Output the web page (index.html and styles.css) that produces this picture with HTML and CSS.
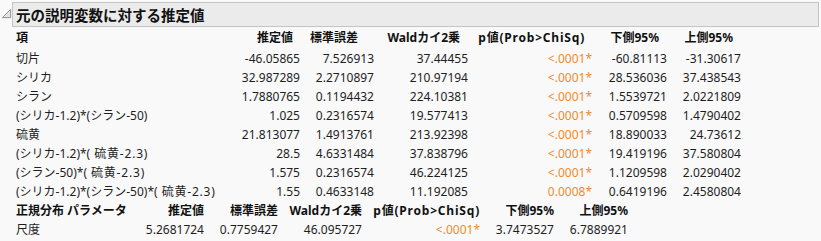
FILE: index.html
```html
<!DOCTYPE html>
<html lang="ja">
<head>
<meta charset="utf-8">
<title>元の説明変数に対する推定値</title>
<link rel="stylesheet" href="styles.css">
</head>
<body>
<div class="outline">
  <div class="outline-head">
    <svg class="disclosure" width="12" height="12" viewBox="0 0 12 12"><polygon points="1.5,10.5 10.5,1.5 10.5,10.5" fill="#e4e4e4" stroke="#8a8a8a" stroke-width="1"/></svg>
    <div class="title-box"><h1 class="title">元の説明変数に対する推定値</h1></div>
  </div>
  <div class="grid t1">
    <div class="th term">項</div>
    <div class="th h1">推定値</div>
    <div class="th h2">標準誤差</div>
    <div class="th h3">Waldカイ2乗</div>
    <div class="th h4 wide">p値(Prob&gt;ChiSq)</div>
    <div class="th h5">下側95%</div>
    <div class="th h6">上側95%</div>

    <div class="td term">切片</div><div class="td">-46.05865</div><div class="td">7.526913</div><div class="td">37.44455</div><div class="td p">&lt;.0001*</div><div class="td">-60.81113</div><div class="td">-31.30617</div>
    <div class="td term">シリカ</div><div class="td">32.987289</div><div class="td">2.2710897</div><div class="td">210.97194</div><div class="td p">&lt;.0001*</div><div class="td">28.536036</div><div class="td">37.438543</div>
    <div class="td term">シラン</div><div class="td">1.7880765</div><div class="td">0.1194432</div><div class="td">224.10381</div><div class="td p">&lt;.0001*</div><div class="td">1.5539721</div><div class="td">2.0221809</div>
    <div class="td term">(シリカ-1.2)*(シラン-50)</div><div class="td">1.025</div><div class="td">0.2316574</div><div class="td">19.577413</div><div class="td p">&lt;.0001*</div><div class="td">0.5709598</div><div class="td">1.4790402</div>
    <div class="td term">硫黄</div><div class="td">21.813077</div><div class="td">1.4913761</div><div class="td">213.92398</div><div class="td p">&lt;.0001*</div><div class="td">18.890033</div><div class="td">24.73612</div>
    <div class="td term">(シリカ-1.2)*(<span class="kj">硫黄-2.3</span>)</div><div class="td">28.5</div><div class="td">4.6331484</div><div class="td">37.838796</div><div class="td p">&lt;.0001*</div><div class="td">19.419196</div><div class="td">37.580804</div>
    <div class="td term">(シラン-50)*(<span class="kj">硫黄-2.3</span>)</div><div class="td">1.575</div><div class="td">0.2316574</div><div class="td">46.224125</div><div class="td p">&lt;.0001*</div><div class="td">1.1209598</div><div class="td">2.0290402</div>
    <div class="td term">(シリカ-1.2)*(シラン-50)*(<span class="kj">硫黄-2.3</span>)</div><div class="td">1.55</div><div class="td">0.4633148</div><div class="td">11.192085</div><div class="td p">0.0008*</div><div class="td">0.6419196</div><div class="td">2.4580804</div>
  </div>
  <div class="grid t2">
    <div class="th term">正規分布 パラメータ</div>
    <div class="th">推定値</div>
    <div class="th">標準誤差</div>
    <div class="th">Waldカイ2乗</div>
    <div class="th wide">p値(Prob&gt;ChiSq)</div>
    <div class="th">下側95%</div>
    <div class="th">上側95%</div>

    <div class="td term">尺度</div><div class="td">5.2681724</div><div class="td">0.7759427</div><div class="td">46.095727</div><div class="td p">&lt;.0001*</div><div class="td">3.7473527</div><div class="td">6.7889921</div>
  </div>
</div>
</body>
</html>
```

FILE: styles.css
```css
html, body {
  margin: 0;
  padding: 0;
  background: #f9f9f9;
}
body {
  font-family: "Noto Sans", "Noto Sans CJK JP", sans-serif;
  font-size: 12px;
  color: #1e1e1e;
}
.outline {
  width: 821px;
}
.outline-head {
  display: flex;
  align-items: flex-start;
  padding-top: 2px;
}
.disclosure {
  display: block;
  margin: 6px 0 0 1px;
  flex: none;
  width: 11px;
  height: 11px;
}
.title-box {
  width: 805px;
  height: 23px;
  background: #ebebeb;
  border: 1px solid #c4c4c4;
  display: flex;
  align-items: center;
}
.title {
  margin: 0 0 0 3px;
  font-family: "Noto Sans CJK JP", sans-serif;
  font-size: 14.5px;
  font-weight: 700;
  line-height: 23px;
  color: #111;
}
.grid {
  display: grid;
  padding-left: 16px;
  line-height: 19px;
  white-space: nowrap;
}
.t1 {
  margin-top: 1px;
  grid-template-columns: 200px 84px 74px 94px 124px 75px 74px;
}
.t2 {
  grid-template-columns: 125px 63px 74px 84px 118px 74px 74px;
}
.th {
  font-weight: 700;
  text-align: right;
  color: #111;
}
.th.wide {
  letter-spacing: 0.8px;
}
.t1 .th {
  margin-bottom: 2px;
}
.th.term, .td.term {
  text-align: left;
}
.td {
  text-align: right;
}
.kj {
  margin-left: 4px;
  letter-spacing: 0.8px;
}
.t1 .h1 { padding-right: 7px; }
.t1 .h2 { padding-right: 16px; }
.t1 .h3 { padding-right: 8px; }
.t1 .h4 { padding-right: 7px; }
.t1 .h5 { padding-right: 8px; }
.t1 .h6 { padding-right: 8px; }
.td.p {
  color: #f08a2c;
}
```
